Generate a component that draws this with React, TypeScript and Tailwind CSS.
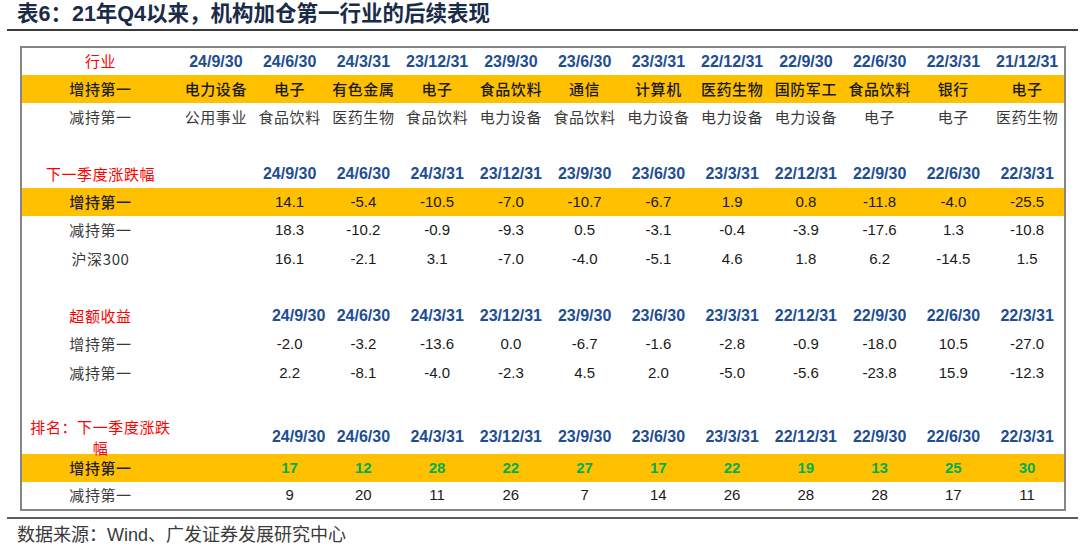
import React from "react";

const DATES = [
  "24/9/30",
  "24/6/30",
  "24/3/31",
  "23/12/31",
  "23/9/30",
  "23/6/30",
  "23/3/31",
  "22/12/31",
  "22/9/30",
  "22/6/30",
  "22/3/31",
  "21/12/31",
];
const DATES11 = ["", ...DATES.slice(0, 11)];

const cjk = "font-['Noto_Sans_CJK_SC',sans-serif]";
const arial = "font-['Liberation_Sans','Noto_Sans_CJK_SC',sans-serif]";

type Kind = "head" | "hi" | "plain" | "rank";

function Row({
  h,
  label,
  cells,
  kind,
  shiftFirst,
  cjkCells,
  labelClass,
}: {
  h: string;
  label: React.ReactNode;
  cells: string[];
  kind: Kind;
  shiftFirst?: boolean;
  cjkCells?: boolean;
  labelClass?: string;
}) {
  const orange = kind === "hi" || kind === "rank";
  let cellCls = `${arial} text-[15px] text-[#1a1a1a]`;
  if (kind === "head") cellCls = `${arial} text-[16px] font-bold text-[#1e4e92]`;
  if (kind === "rank") cellCls = `${arial} text-[15px] font-bold text-[#00b050]`;
  if (cjkCells)
    cellCls = `${cjk} text-[15px] tracking-[0.6px] ${
      orange ? "font-medium text-[#1a1a1a]" : "text-[#3a3a3a]"
    }`;
  return (
    <div
      className={`grid grid-cols-[157px_repeat(12,minmax(0,1fr))] items-center ${h} ${
        orange ? "bg-[#ffc000]" : ""
      }`}
    >
      <div
        className={`text-center ${cjk} text-[15px] tracking-[0.6px] ${
          labelClass ?? (orange ? "font-medium text-[#1f1f1f]" : "text-[#3a3a3a]")
        }`}
      >
        {label}
      </div>
      {cells.map((c, i) => (
        <div
          key={i}
          className={`text-center whitespace-nowrap ${cellCls} ${
            shiftFirst && i === 1 ? "pl-[18px]" : ""
          }`}
        >
          {c}
        </div>
      ))}
    </div>
  );
}

const red = "text-[#ff0000]";

export default function App() {
  return (
    <div className="w-[1080px] h-[546px] bg-white overflow-hidden">
      <div
        className={`h-[29px] pl-[17px] flex items-center text-[21.5px] font-bold text-[#1a2b4a] ${arial}`}
      >
        表6：21年Q4以来，机构加仓第一行业的后续表现
      </div>
      <div className="ml-[7px] w-[1071px] h-[2px] bg-[#3a3a3a]" />

      <div className="mt-[15px] ml-[20px] w-[1046px] border-2 border-[#858585]">
        {/* 行业 */}
        <Row h="h-[27px]" kind="head" label="行业" labelClass={red} cells={DATES} />
        <Row
          h="h-[28px]"
          kind="hi"
          cjkCells
          label="增持第一"
          cells={[
            "电力设备",
            "电子",
            "有色金属",
            "电子",
            "食品饮料",
            "通信",
            "计算机",
            "医药生物",
            "国防军工",
            "食品饮料",
            "银行",
            "电子",
          ]}
        />
        <Row
          h="h-[29px]"
          kind="plain"
          cjkCells
          label="减持第一"
          cells={[
            "公用事业",
            "食品饮料",
            "医药生物",
            "食品饮料",
            "电力设备",
            "食品饮料",
            "电力设备",
            "电力设备",
            "电力设备",
            "电子",
            "电子",
            "医药生物",
          ]}
        />
        <div className="h-[28px]" />

        {/* 下一季度涨跌幅 */}
        <Row h="h-[28px]" kind="head" label="下一季度涨跌幅" labelClass={red} cells={DATES11} />
        <Row
          h="h-[28px]"
          kind="hi"
          label="增持第一"
          cells={["", "14.1", "-5.4", "-10.5", "-7.0", "-10.7", "-6.7", "1.9", "0.8", "-11.8", "-4.0", "-25.5"]}
        />
        <Row
          h="h-[29px]"
          kind="plain"
          label="减持第一"
          cells={["", "18.3", "-10.2", "-0.9", "-9.3", "0.5", "-3.1", "-0.4", "-3.9", "-17.6", "1.3", "-10.8"]}
        />
        <Row
          h="h-[28px]"
          kind="plain"
          label="沪深300"
          cells={["", "16.1", "-2.1", "3.1", "-7.0", "-4.0", "-5.1", "4.6", "1.8", "6.2", "-14.5", "1.5"]}
        />
        <div className="h-[29px]" />

        {/* 超额收益 */}
        <Row h="h-[28px]" kind="head" label="超额收益" labelClass={red} cells={DATES11} shiftFirst />
        <Row
          h="h-[29px]"
          kind="plain"
          label="增持第一"
          cells={["", "-2.0", "-3.2", "-13.6", "0.0", "-6.7", "-1.6", "-2.8", "-0.9", "-18.0", "10.5", "-27.0"]}
        />
        <Row
          h="h-[29px]"
          kind="plain"
          label="减持第一"
          cells={["", "2.2", "-8.1", "-4.0", "-2.3", "4.5", "2.0", "-5.0", "-5.6", "-23.8", "15.9", "-12.3"]}
        />
        <div className="h-[28px]" />

        {/* 排名 */}
        <Row
          h="h-[38px]"
          kind="head"
          labelClass={`${red} leading-[21px]`}
          label={
            <>
              排名：下一季度涨跌
              <br />幅
            </>
          }
          cells={DATES11}
          shiftFirst
        />
        <Row
          h="h-[28px]"
          kind="rank"
          label="增持第一"
          cells={["", "17", "12", "28", "22", "27", "17", "22", "19", "13", "25", "30"]}
        />
        <Row
          h="h-[27px]"
          kind="plain"
          label="减持第一"
          cells={["", "9", "20", "11", "26", "7", "14", "26", "28", "28", "17", "11"]}
        />
      </div>

      <div className="mt-[6px] ml-[7px] w-[1071px] h-[2px] bg-[#5a5a5a]" />
      <div className={`mt-[4px] pl-[17px] h-[24px] flex items-center text-[18px] text-[#3a3a3a] ${arial}`}>
        数据来源：Wind、广发证券发展研究中心
      </div>
    </div>
  );
}
